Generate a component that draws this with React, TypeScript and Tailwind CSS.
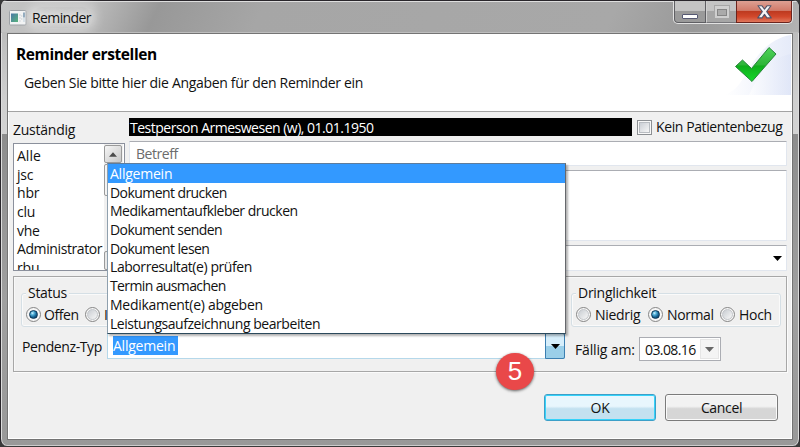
import React from "react";

const people: [string, string][] = [
  ["Alle", "tracking-[0px]"],
  ["jsc", "tracking-[-0.2px]"],
  ["hbr", "tracking-[-0.2px]"],
  ["clu", "tracking-[-0.3px]"],
  ["vhe", "tracking-[-0.3px]"],
  ["Administrator", "tracking-[-0.4px]"],
  ["rbu", "tracking-[-0.2px]"],
];

const types: [string, string][] = [
  ["Allgemein", "tracking-[-0.23px]"],
  ["Dokument drucken", "tracking-[-0.57px]"],
  ["Medikamentaufkleber drucken", "tracking-[-0.5px]"],
  ["Dokument senden", "tracking-[-0.58px]"],
  ["Dokument lesen", "tracking-[-0.55px]"],
  ["Laborresultat(e) prüfen", "tracking-[-0.43px]"],
  ["Termin ausmachen", "tracking-[-0.62px]"],
  ["Medikament(e) abgeben", "tracking-[-0.28px]"],
  ["Leistungsaufzeichnung bearbeiten", "tracking-[-0.45px]"],
];

function Radio({ on = false }: { on?: boolean }) {
  return (
    <span className="flex h-[15px] w-[15px] shrink-0 items-center justify-center rounded-full border border-[#858585] bg-[#f6f6f6]">
      {on ? (
        <span className="h-[9px] w-[9px] rounded-full border border-[#0c3555] bg-[radial-gradient(circle_at_35%_30%,#d8f4ff_0%,#58b5dc_25%,#146292_60%,#0b3554_100%)]" />
      ) : (
        <span className="h-[11px] w-[11px] rounded-full border border-[#c3c6ca] bg-linear-to-br from-[#c9cdd2] to-[#f8f8f8]" />
      )}
    </span>
  );
}

function Arrow({ className }: { className: string }) {
  return (
    <svg className={className} width="9" height="5" viewBox="0 0 9 5">
      <path d="M0 0h9L4.5 5z" fill="currentColor" />
    </svg>
  );
}

function TitleBar() {
  return (
    <div className="flex h-[33px] shrink-0 items-start justify-between border-t border-[#29262b] bg-[linear-gradient(115deg,#c4c4c4_0px,#bcbcbc_85px,#989898_145px,#a6a6a6_240px,#a8a8a8_560px,#999_640px,#a3a3a3_690px,#b4b4b4_100%)] shadow-[inset_0_1px_0_#dedede,inset_0_-1px_0_#bdbdbd]">
      <div className="flex h-[33px] items-center pl-[8px]">
        <svg width="18" height="16" viewBox="0 0 18 16">
          <defs>
            <linearGradient id="pane" x1="0" y1="0" x2="1" y2="1">
              <stop offset="0" stopColor="#4a78a8" />
              <stop offset="1" stopColor="#58b37c" />
            </linearGradient>
          </defs>
          <rect x="0.5" y="0.5" width="16.500" height="14.5" rx="1" fill="#f2f3f4" stroke="#9da1a6" />
          <rect x="2" y="3.500" width="7" height="8.500" fill="url(#pane)" />
          <path d="M11 4v8M12.800 5v6" stroke="#d3d7db" strokeWidth="1" strokeDasharray="2 1" />
          <path d="M15 2.5v5" stroke="#477394" strokeWidth="1.2" />
          <path d="M15 8v4" stroke="#b9cbd8" strokeWidth="1" />
        </svg>
        <span className="ml-[5px] rounded-full bg-white/15 text-[14px] tracking-[-0.6px] shadow-[0_0_8px_7px_rgba(255,255,255,0.22)] [text-shadow:0_0_8px_#fff,0_0_10px_#fff]">Reminder</span>
      </div>
      <div className="mr-[6px] flex h-[23px] w-[120px] overflow-hidden rounded-b-[5px] border border-t-0 border-[#e2e2e2]">
        <div className="flex w-[32px] justify-center rounded-bl-[4px] border-x border-b border-[#5f5f63] bg-linear-to-b from-[#c4c4c4] from-45% to-[#9a9a9a] to-50% pt-[13px]">
          <span className="h-[5px] w-[16px] rounded-[1px] border border-[#565973] bg-white" />
        </div>
        <div className="flex w-[30px] justify-center border-b border-l border-b-[#77777b] border-l-[#d0d0d0] bg-linear-to-b from-[#c4c4c4] from-45% to-[#a6a6a6] to-50% pt-[4px]">
          <span className="flex h-[14px] w-[16px] items-center justify-center border border-[#a6a6a6] bg-[#cfcfcf]">
            <span className="h-[7px] w-[10px] border border-[#858585] bg-[#aaa]" />
          </span>
        </div>
        <div className="flex flex-1 justify-center rounded-br-[4px] border border-t-0 border-[#6c241d] bg-[linear-gradient(#dda093_0%,#d17b6a_45%,#be3a20_50%,#d2482c_75%,#e0775c_100%)] pt-[4px]">
          <svg width="15" height="14" viewBox="0 0 15 13" preserveAspectRatio="none">
            <path d="M1 .7h4l2.5 3.1L10 .7h4L9.7 6.2l4.5 5.8h-4.3L7.5 8.7 5.100 12H.8l4.500-5.800z" fill="#f5f5f5" stroke="#51546a" strokeWidth="1.1" strokeLinejoin="round" />
          </svg>
        </div>
      </div>
    </div>
  );
}

function Header() {
  return (
    <div className="flex h-[78px] shrink-0 justify-between border-b border-[#a3a3a3] bg-white">
      <div className="flex flex-col pl-[8px]">
        <h1 className="mt-[10px] h-[20px] text-[15.5px] leading-[20px] font-bold tracking-[-0.41px] text-black">Reminder erstellen</h1>
        <p className="mt-[9px] pl-[8px] leading-[20px] tracking-[-0.32px]">Geben Sie bitte hier die Angaben für den Reminder ein</p>
      </div>
      <svg className="mr-px" width="68" height="62" viewBox="0 0 68 62">
        <defs>
          <linearGradient id="swoosh" x1="0" y1="0" x2="1" y2="0">
            <stop offset="0" stopColor="#fff" />
            <stop offset="1" stopColor="#dde4f7" />
          </linearGradient>
          <linearGradient id="tick" x1="0" y1="0" x2="0" y2="1">
            <stop offset="0" stopColor="#4fd35a" />
            <stop offset="0.5" stopColor="#2fb53a" />
            <stop offset="0.55" stopColor="#0fae1c" />
            <stop offset="1" stopColor="#14d92a" />
          </linearGradient>
        </defs>
        <path d="M68 1C48 4 34 20 24 38C17 51 11 57 2 61H68z" fill="url(#swoosh)" opacity=".75" />
        <path d="M68 20C49 23 37 37 26 61H68z" fill="url(#swoosh)" opacity=".65" />
        <path d="M12.500 32.500L19.500 26l9 8.500L46 13.500l7 6.500L29 47.500z" fill="url(#tick)" stroke="#27843a" strokeWidth="1" strokeLinejoin="round" />
      </svg>
    </div>
  );
}

function PeopleList() {
  return (
    <div className="flex h-[128px] w-[112px] overflow-hidden border border-[#8b909c] bg-white">
      <ul className="w-[90px] shrink-0 pt-[2px] pl-[3px]">
        {people.map(([name, tracking]) => (
          <li key={name} className={`h-[18.7px] leading-[19px] whitespace-nowrap ${tracking}`}>{name}</li>
        ))}
      </ul>
      <div className="flex w-[19px] flex-col justify-between bg-[#f0f0f0] pt-px">
        <div className="flex h-[18px] w-[18px] items-center justify-center rounded-[2px] border border-[#9a9a9a] bg-linear-to-br from-[#f6f6f6] to-[#c8c8c8]">
          <Arrow className="w-[8px] rotate-180 text-[#4a4a4a]" />
        </div>
        <div className="mt-px mb-auto h-[32px] w-[18px] rounded-[2px] border border-[#9a9a9a] bg-linear-to-r from-[#f6f6f6] to-[#cfcfcf]" />
        <div className="h-[19px] w-[18px] rounded-[2px] border border-[#9a9a9a] bg-[#e8e8e8]" />
      </div>
    </div>
  );
}

const field = "border border-[#e1e6ee] border-t-[#abadb3] bg-white rounded-[1px]";
const group = "h-[34px] rounded-[3px] border border-[#d5dfe5] px-[4px] shadow-[inset_0_0_0_1px_#fafafa]";
const legend = "block w-fit bg-[#f0f0f0] -mt-[11px] h-[19px] leading-[19px] px-[2px] whitespace-nowrap";

export default function App() {
  return (
    <div className="relative flex h-[447px] w-[800px] flex-col overflow-hidden bg-[#3a3a3a] text-[14px] text-[#111] [font-family:'Open_Sans','Noto_Sans',sans-serif]">
      <div className="flex h-[446px] flex-col overflow-hidden rounded-[7px] border-x border-[#29262b] bg-[linear-gradient(#b4b4b4_0px,#cfcfcf_100px,#d3d3d3_134px,#8d8d8d_134px,#a0a0a0_300px,#999_100%)] shadow-[inset_1px_0_0_#ddd,inset_-1px_0_0_#ddd,inset_0_-1px_0_#ccc]">
        <TitleBar />
        <div className="mx-[6px] flex h-[407px] flex-col border border-[#747474] bg-[#f0f0f0] shadow-[inset_0_-1px_0_#fff,inset_1px_0_0_#fff,inset_-1px_0_0_#fff]">
          <Header />

          <main className="flex flex-1 flex-col pl-[5px]">
            <div className="flex gap-[4px] pt-[6px]">
              <div className="w-[112px]">
                <div className="h-[25px] leading-[24px] tracking-[-0.25px]">Zuständig</div>
                <PeopleList />
              </div>
              <div className="flex w-[658px] flex-col">
                <div className="flex h-[18px] items-center">
                  <div className="h-[18px] w-[503px] bg-black pl-px leading-[19px] tracking-[-0.5px] text-white">Testperson Armeswesen (w), 01.01.1950</div>
                  <span className="ml-[5px] flex h-[15px] w-[15px] items-center justify-center border border-[#8c8f93] bg-[#f8f8f8]">
                    <span className="h-[11px] w-[11px] border border-[#b8bcc1] bg-linear-to-br from-[#cbcfd5] to-[#f6f6f6]" />
                  </span>
                  <span className="ml-[4px] leading-[18px] tracking-[-0.4px] whitespace-nowrap">Kein Patientenbezug</span>
                </div>
                <div className={`${field} mt-[5px] h-[25px] pl-[6px] leading-[24px] tracking-[-0.45px] text-[#6b6b6b]`}>Betreff</div>
                <div className={`${field} mt-[4px] h-[71px]`} />
                <div className={`${field} mt-[4px] flex h-[26px] items-center justify-end pr-[4px]`}>
                  <Arrow className="text-black" />
                </div>
              </div>
            </div>

            <section className="mt-[5px] h-[96px] w-[774px] border border-[#a7a7a7] pt-[16px] pr-[5px] pl-[7px] shadow-[inset_1px_1px_0_#f8f8f8,1px_1px_0_#fbfbfb]">
              <div className="flex justify-between">
                <fieldset className={`${group} w-[400px]`}>
                  <span className={`${legend} tracking-[-0.3px]`}>Status</span>
                  <div className="mt-[3px] flex h-[18px] items-center">
                    <Radio on />
                    <span className="ml-[3px] w-[41px] tracking-[-0.4px]">Offen</span>
                    <Radio />
                    <span className="ml-[4px]">I</span>
                  </div>
                </fieldset>
                <fieldset className={`${group} w-[210px]`}>
                  <span className={`${legend} tracking-[-0.27px]`}>Dringlichkeit</span>
                  <div className="mt-[3px] flex h-[18px] items-center">
                    <Radio />
                    <span className="ml-[4px] w-[53px] tracking-[-0.3px]">Niedrig</span>
                    <Radio on />
                    <span className="ml-[4px] w-[53px] tracking-[-0.4px]">Normal</span>
                    <Radio />
                    <span className="ml-[4px] tracking-[-0.3px]">Hoch</span>
                  </div>
                </fieldset>
              </div>
              <div className="mt-[6px] flex items-start pl-px">
                <span className="mt-[4px] w-[85px] leading-[19px] tracking-[-0.4px] whitespace-nowrap">Pendenz-Typ</span>
                <div className="flex h-[26px] w-[458px] justify-between border border-[#b5d8ea] bg-white pl-[5px]">
                  <span className="mt-[2px] h-[19px] w-[65px] bg-[#3399ff] leading-[19px] tracking-[-0.23px] text-white">Allgemein</span>
                  <span className="-my-px -mr-px flex w-[20px] items-center justify-center rounded-r-[2px] border border-[#3c7fb1] bg-linear-to-b from-[#d6eefb] from-48% to-[#9bcfe9] to-52%">
                    <Arrow className="text-black" />
                  </span>
                </div>
                <span className="mt-[7px] ml-[10px] w-[64px] leading-[19px] tracking-[-0.15px] whitespace-nowrap">Fällig am:</span>
                <div className="mt-[4px] flex h-[24px] w-[82px] justify-between border border-[#abadb3] bg-white pl-[5px]">
                  <span className="leading-[23px] tracking-[-0.6px]">03.08.16</span>
                  <span className="m-px flex w-[19px] items-center justify-center border border-[#e6e6e6] bg-[#f4f4f4]">
                    <Arrow className="text-[#686868]" />
                  </span>
                </div>
              </div>
            </section>

            <div className="mt-[22px] flex justify-end gap-[9px] pr-[14px]">
              <button className="h-[27px] w-[112px] rounded-[3px] border border-[#3c9fc8] bg-linear-to-b from-[#e8f6fd] from-45% to-[#c3e1f0] to-55% leading-none tracking-[-0.3px] shadow-[inset_0_0_0_1px_#35d3fa]">OK</button>
              <button className="h-[27px] w-[113px] rounded-[3px] border border-[#7b7b7b] bg-linear-to-b from-[#f2f2f2] from-45% to-[#d6d6d6] to-55% leading-none tracking-[-0.35px] shadow-[inset_0_0_0_1px_#fafafa]">Cancel</button>
            </div>
          </main>
        </div>
      </div>

      <ul className="absolute top-[163px] left-[107px] h-[171px] w-[459px] border border-t-[#5e7c9c] border-r-[#66686c] border-b-[#2c4a5c] border-l-[#8fa0ae] bg-white shadow-[2px_2px_2px_rgba(0,0,0,0.3)]">
        {types.map(([label, tracking], i) => (
          <li key={label} className={`h-[18.7px] pl-[2px] leading-[19px] whitespace-nowrap ${tracking} ${i === 0 ? "bg-[#3399ff] text-white" : ""}`}>
            {label}
          </li>
        ))}
      </ul>

      <div className="absolute top-[353px] left-[496px] flex h-[37px] w-[38px] items-center justify-center rounded-full bg-[#e94849] text-[26px] text-white shadow-[0_1px_3px_rgba(0,0,0,0.6)] [font-family:'Liberation_Sans',Arial,sans-serif]">5</div>
    </div>
  );
}
